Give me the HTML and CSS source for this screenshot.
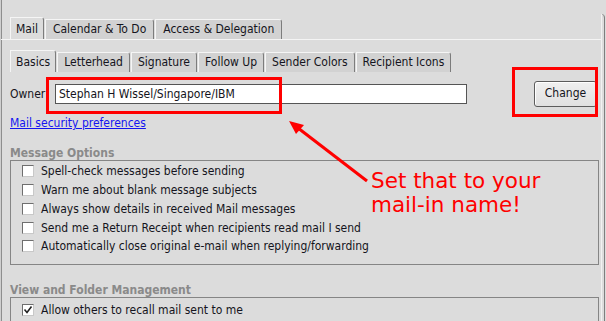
FILE: index.html
```html
<!DOCTYPE html>
<html>
  <head>
    <title>Mail Preferences</title>
    <link rel="stylesheet" href="styles.css">
  </head>
<body>
<div class = 'window'>
  <div class = 'tabs tabs-main'>
    <span class = 'tab active'>Mail</span>
    <span class = 'tab'>Calendar &amp; To Do</span>
    <span class = 'tab'>Access &amp; Delegation</span>
  </div>
  <div class = 'tabs tabs-sub'>
    <span class = 'tab active'>Basics</span>
    <span class = 'tab'>Letterhead</span>
    <span class = 'tab'>Signature</span>
    <span class = 'tab'>Follow Up</span>
    <span class = 'tab'>Sender Colors</span>
    <span class = 'tab'>Recipient Icons</span>
  </div>

  <div class = 'owner-row'>
    <span class = 'owner-label'>Owner</span>
    <span class = 'owner-field'>Stephan H Wissel/Singapore/IBM</span>
    <span class = 'btn'>Change</span>
  </div>
  <a class = 'link' href = '#'>Mail security preferences</a>

  <div class = 'group-title'>Message Options</div>
  <div class = 'group'>
    <div class = 'row'><span class = 'box'></span>Spell-check messages before sending</div>
    <div class = 'row'><span class = 'box'></span>Warn me about blank message subjects</div>
    <div class = 'row'><span class = 'box'></span>Always show details in received Mail messages</div>
    <div class = 'row'><span class = 'box'></span>Send me a Return Receipt when recipients read mail I send</div>
    <div class = 'row'><span class = 'box'></span>Automatically close original e-mail when replying/forwarding</div>
  </div>

  <div class = 'group-title title-low'>View and Folder Management</div>
  <div class = 'group group-last'>
    <div class = 'row'>
      <span class = 'box'>
        <svg width = '10' height = '10' viewBox = '0 0 10 10'><polyline points = '1.5,4.5 4,7.5 8.5,1.5' fill = 'none' stroke = '#222' stroke-width = '1.6'/></svg>
      </span>Allow others to recall mail sent to me
    </div>
  </div>

  <!-- annotation overlay -->
  <div class = 'mark mark-owner'></div>
  <div class = 'mark mark-change'></div>
  <svg class = 'arrow' width = '606' height = '321' viewBox = '0 0 606 321'>
    <line x1 = '367' y1 = '181' x2 = '298' y2 = '128' stroke = '#f00' stroke-width = '3'/>
    <polygon points = '289,121 304,125 296,134' fill = '#f00'/>
  </svg>
  <div class = 'note'>Set that to your<br>mail-in name!</div>
</div>
</body>
</html>
```

FILE: styles.css
```css
body {
  margin: 0;
  background: #dcdcdc;
  font-family: 'DejaVu Sans Condensed', 'DejaVu Sans', sans-serif;
  font-size: 12px;
  color: #141420;
}

.window {
  position: relative;
  height: 321px;
  overflow: hidden;
  border-left: 1px solid #cfcfcf;
  box-shadow: inset 1px 0 #8e8e8e;
}

.window::after {
  content: '';
  position: absolute;
  top: 14px;
  right: 1px;
  bottom: 0;
  width: 2px;
  border-left: 1px solid #f2f2f2;
  border-right: 1px solid #7e7e7e;
  border-top-right-radius: 4px;
}

.tabs {
  display: flex;
  align-items: flex-end;
  padding-left: 9px;
}

.tabs-main {
  margin-top: 17px;
  margin-right: 5px;
  border-bottom: 1px solid #f4f4f4;
}

.tabs-sub {
  margin-top: 10px;
}

.tab {
  height: 19px;
  line-height: 19px;
  padding: 0 7px;
  background: #d2d2d2;
  border: 1px solid #f5f5f5;
  border-right-color: #7c7c7c;
  border-bottom: none;
  border-top-right-radius: 3px;
  margin-right: 1px;
  white-space: nowrap;
}

.tabs-sub .tab {
  padding: 0 6px;
}

.tab.active,
.tabs-sub .tab.active {
  height: 21px;
  line-height: 22px;
  padding: 0 5px 0 5px;
  background: #dcdcdc;
}

.owner-row {
  display: flex;
  align-items: center;
  margin-top: 9px;
  padding-left: 9px;
  height: 26px;
}

.owner-label {
  width: 45px;
}

.owner-field {
  box-sizing: border-box;
  width: 412px;
  height: 20px;
  line-height: 18px;
  padding-left: 3px;
  background: #fff;
  border: 1px solid #555;
}

.btn {
  box-sizing: border-box;
  margin-left: auto;
  margin-right: 9px;
  width: 63px;
  height: 26px;
  line-height: 23px;
  text-align: center;
  background: linear-gradient(#f0f0f0, #e0e0e0);
  border: 1px solid #5c5c5c;
  border-radius: 3px;
  box-shadow: inset 1px 1px #fff;
}

.link {
  display: block;
  margin: 8px 0 0 9px;
  width: max-content;
  line-height: 16px;
  color: #1414f0;
  text-decoration: underline;
}

.group-title {
  margin: 15px 0 0 9px;
  line-height: 14px;
  font-weight: bold;
  color: #8a8a8a;
}

.title-low {
  margin-top: 18px;
}

.group {
  margin: 0 7px 0 9px;
  padding: 1px 0 8px 11px;
  border: 1px solid #858585;
}

.group-last {
  padding-top: 3px;
  padding-bottom: 40px;
}

.row {
  display: flex;
  align-items: center;
  height: 18.75px;
  white-space: nowrap;
}

.box {
  box-sizing: border-box;
  display: flex;
  align-items: center;
  justify-content: center;
  width: 12px;
  height: 12px;
  margin-right: 7px;
  background: #fff;
  border: 1px solid #6e6e6e;
  border-right-color: #c8c8c8;
  border-bottom-color: #c8c8c8;
}

.mark {
  position: absolute;
  box-sizing: border-box;
  border: 3px solid #f00;
}

.mark-owner {
  left: 45px;
  top: 77px;
  width: 236px;
  height: 37px;
}

.mark-change {
  left: 511px;
  top: 67px;
  width: 86px;
  height: 50px;
}

.arrow {
  position: absolute;
  left: -1px;
  top: 0;
}

.note {
  position: absolute;
  left: 370px;
  top: 169px;
  font-family: 'DejaVu Sans', sans-serif;
  font-size: 21.5px;
  line-height: 24px;
  color: #f00;
}
```
